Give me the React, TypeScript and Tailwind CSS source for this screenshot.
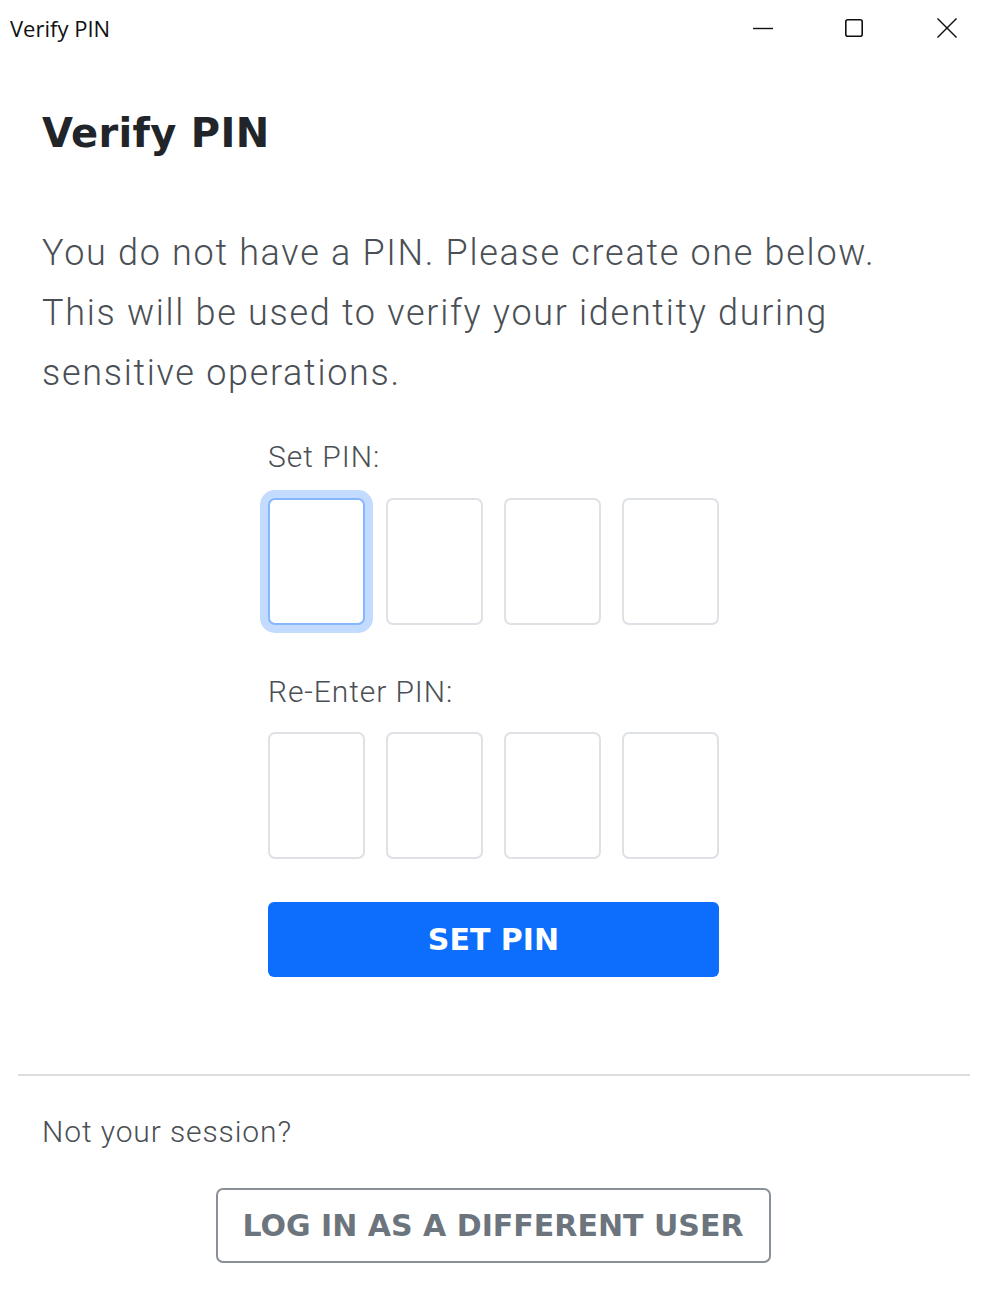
import React from "react";

const roboto = { fontFamily: "Roboto, 'Liberation Sans', sans-serif" };
const bold = { fontFamily: "'DejaVu Sans', Inter, sans-serif" };

function PinBox({ focused }: { focused?: boolean }) {
  return (
    <div
      className={
        "h-[127px] w-[97px] rounded-[7px] border-2 bg-white " +
        (focused
          ? "border-[#86b7fe] shadow-[0_0_0_8px_#c2dbff]"
          : "border-[#dee2e6]")
      }
    />
  );
}

export default function App() {
  return (
    <div className="flex min-h-[1302px] w-[990px] flex-col bg-white">
      {/* Title bar */}
      <div className="flex h-[56px] items-center justify-between">
        <span
          className="pl-[10px] text-[22px] text-[#111]"
          style={{ fontFamily: "'Open Sans', 'Noto Sans', sans-serif" }}
        >
          Verify PIN
        </span>
        <div className="flex items-center pr-[33px]">
          <svg width="20" height="20" viewBox="0 0 20 20">
            <line x1="0" y1="10.5" x2="20" y2="10.5" stroke="#111" strokeWidth="1.4" />
          </svg>
          <svg className="ml-[72px]" width="18" height="18" viewBox="0 0 18 18">
            <rect x="0.8" y="0.8" width="16.4" height="16.4" rx="2" fill="none" stroke="#111" strokeWidth="1.6" />
          </svg>
          <svg className="ml-[74px]" width="20" height="20" viewBox="0 0 20 20">
            <line x1="0.5" y1="0.5" x2="19.5" y2="19.5" stroke="#111" strokeWidth="1.4" />
            <line x1="19.5" y1="0.5" x2="0.5" y2="19.5" stroke="#111" strokeWidth="1.4" />
          </svg>
        </div>
      </div>

      {/* Content */}
      <div className="flex flex-col px-[42px]">
        <h1
          className="mt-[53px] text-[40px] leading-[48px] font-bold tracking-[0.3px] text-[#212529]"
          style={bold}
        >
          Verify PIN
        </h1>
        <p
          className="mt-[66px] text-[36px] leading-[60px] font-light tracking-[1.7px] text-[#4a4f55]"
          style={roboto}
        >
          You do not have a PIN. Please create one below.
          <br />
          This will be used to verify your identity during
          <br />
          sensitive operations.
        </p>

        <div className="ml-[226px] flex w-[451px] flex-col">
          <label
            className="mt-[36px] text-[30px] leading-[36px] font-light tracking-[1px] text-[#4a4f55]"
            style={roboto}
          >
            Set PIN:
          </label>
          <div className="mt-[23px] flex gap-[21px]">
            <PinBox focused />
            <PinBox />
            <PinBox />
            <PinBox />
          </div>
          <label
            className="mt-[49px] text-[30px] leading-[36px] font-light tracking-[0.9px] text-[#4a4f55]"
            style={roboto}
          >
            Re-Enter PIN:
          </label>
          <div className="mt-[22px] flex gap-[21px]">
            <PinBox />
            <PinBox />
            <PinBox />
            <PinBox />
          </div>
          <button
            className="mt-[43px] flex h-[75px] w-[451px] items-center justify-center rounded-[6px] bg-[#0d6efd] text-[30px] font-bold text-white"
            style={bold}
          >
            SET PIN
          </button>
        </div>
      </div>

      <div className="mt-[97px] ml-[18px] mr-[20px] h-[2px] bg-[#dcdee0]" />

      <div className="flex flex-col px-[42px]">
        <p
          className="mt-[38px] text-[30px] leading-[36px] font-light tracking-[0.9px] text-[#4a4f55]"
          style={roboto}
        >
          Not your session?
        </p>
        <div className="mt-[38px] flex justify-center pr-[4px]">
          <button
            className="flex h-[75px] w-[555px] items-center justify-center rounded-[7px] border-2 border-[#8a9097] bg-white text-[30px] font-bold text-[#6c757d]"
            style={bold}
          >
            LOG IN AS A DIFFERENT USER
          </button>
        </div>
      </div>
    </div>
  );
}
